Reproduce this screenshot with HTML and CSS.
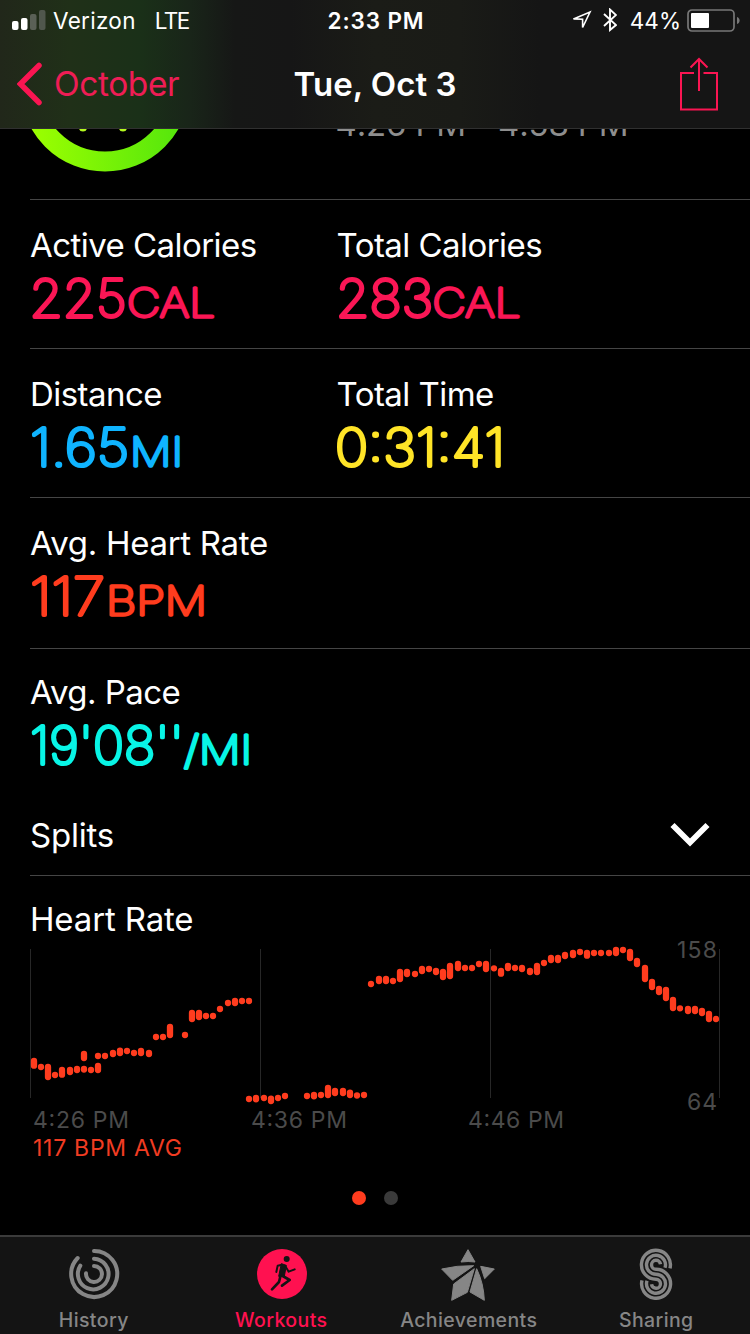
FILE: index.html
```html
<!DOCTYPE html>
<html>
	<head>
		<meta charset="utf-8">
		<title>Workouts</title>
		<link rel="stylesheet" href="styles.css">
	</head>
	<body>
		<header class="header">
			<div class="status">
				<div class="status-left">
					<svg class="signal" viewBox="0 0 34 21">
						<rect x="0" y="11" width="6.5" height="9" rx="2" fill="#fff"/>
						<rect x="9" y="8" width="6.5" height="12" rx="2" fill="#fff"/>
						<rect x="18" y="4" width="6.5" height="16" rx="2" fill="#5a6056"/>
						<rect x="27" y="0" width="6.5" height="20" rx="2" fill="#50574d"/>
					</svg>
					<span class="carrier">Verizon</span>
					<span class="network">LTE</span>
				</div>
				<div class="clock">2:33 PM</div>
				<div class="status-right">
					<svg class="location" viewBox="0 0 20 20">
						<path d="M1.5 8.9L18 2L10.600 17.500L10.600 9.200Z" fill="none" stroke="#fff" stroke-width="1.6"/>
					</svg>
					<svg class="bluetooth" viewBox="0 0 14 24">
						<path d="M1 6L13 17L7 22V1.500L13 7L1 18" fill="none" stroke="#fff" stroke-width="1.9"/>
					</svg>
					<span class="percent">44%</span>
					<svg class="battery" viewBox="0 0 54 24">
						<rect x="1" y="1" width="46" height="21" rx="4" fill="none" stroke="#777" stroke-width="1.7"/>
						<rect x="4" y="4" width="18" height="15" rx="1" fill="#fff"/>
						<path d="M50 8C53.500 9 53.500 14 50 15Z" fill="#777"/>
					</svg>
				</div>
			</div>
			<div class="nav">
				<a class="back">
					<svg class="back-icon" viewBox="0 0 26 44">
						<path d="M22 3.500L3.500 22L22 40.500" fill="none" stroke="#fa1552" stroke-width="5.500" stroke-linecap="round"/>
					</svg>
					<span>October</span>
				</a>
				<h1 class="title">Tue, Oct 3</h1>
				<a class="share">
					<svg class="share-icon" viewBox="0 0 40 54">
						<path d="M15 16H2V52.500H38V16H24.500M20 34V3M11.500 10.500L20 2L28.500 10.500" fill="none" stroke="#fa1552" stroke-width="2"/>
					</svg>
				</a>
			</div>
		</header>

		<main class="content">
			<!-- workout summary, scrolled under the header -->
			<section class="summary">
				<svg class="ring" viewBox="0 0 150 70">
					<defs>
						<linearGradient id="green" x1="0" x2="1">
							<stop offset="0" stop-color="#9cff00"/>
							<stop offset="1" stop-color="#55e60c"/>
						</linearGradient>
					</defs>
					<circle cx="75" cy="-42.200" r="74.700" fill="none" stroke="url(#green)" stroke-width="20"/>
					<circle cx="53" cy="-1.500" r="4" fill="#b4fa20"/>
					<circle cx="93" cy="-1.500" r="4" fill="#b4fa20"/>
				</svg>
				<div class="times"><span>4:26 PM</span><span>4:58 PM</span></div>
			</section>

			<section class="row">
				<div class="stat">
					<div class="label">Active Calories</div>
					<svg class="value pink" viewBox="0 0 300 56">
						<text class="num" x="-0.500" y="45.500" textLength="97" lengthAdjust="spacingAndGlyphs">225</text>
						<text class="unit" x="97" y="45.500" textLength="88" lengthAdjust="spacingAndGlyphs">CAL</text>
					</svg>
				</div>
				<div class="stat">
					<div class="label">Total Calories</div>
					<svg class="value pink" viewBox="0 0 300 56">
						<text class="num" x="-1" y="45.500" textLength="97" lengthAdjust="spacingAndGlyphs">283</text>
						<text class="unit" x="95.500" y="45.500" textLength="88" lengthAdjust="spacingAndGlyphs">CAL</text>
					</svg>
				</div>
			</section>

			<section class="row">
				<div class="stat">
					<div class="label">Distance</div>
					<svg class="value blue" viewBox="0 0 300 56">
						<text class="num" x="0" y="45.500" textLength="99" lengthAdjust="spacingAndGlyphs">1.65</text>
						<text class="unit" x="100" y="45.500" textLength="53" lengthAdjust="spacingAndGlyphs">MI</text>
					</svg>
				</div>
				<div class="stat">
					<div class="label">Total Time</div>
					<svg class="value yellow" viewBox="0 0 300 56">
						<text class="num" x="-2" y="45.500" textLength="170" lengthAdjust="spacingAndGlyphs">0:31:41</text>
					</svg>
				</div>
			</section>

			<section class="row row-heart">
				<div class="stat">
					<div class="label wide">Avg. Heart Rate</div>
					<svg class="value red" viewBox="0 0 300 56">
						<text class="num" x="0" y="45.500" textLength="75" lengthAdjust="spacingAndGlyphs">117</text>
						<text class="unit" x="76" y="45.500" textLength="101" lengthAdjust="spacingAndGlyphs">BPM</text>
					</svg>
				</div>
			</section>

			<section class="row row-pace">
				<div class="stat">
					<div class="label">Avg. Pace</div>
					<svg class="value cyan" viewBox="0 0 300 56">
						<text class="num" x="0" y="45.500" textLength="154" lengthAdjust="spacingAndGlyphs">19'08''</text>
						<text class="unit" x="154" y="45.500" textLength="68" lengthAdjust="spacingAndGlyphs">/MI</text>
					</svg>
				</div>
			</section>

			<section class="splits">
				<div class="label">Splits</div>
				<svg class="chevron" viewBox="0 0 40 26">
					<path d="M2.500 3L20 20.500L37.500 3" fill="none" stroke="#fff" stroke-width="5.800"/>
				</svg>
			</section>

			<section class="heart">
				<div class="label">Heart Rate</div>
				<svg class="chart" viewBox="0 0 750 230">
					<path class="grid" d="M30.500 9V158M260.500 9V158M490.500 9V158M719.500 9V158"/>
					<path class="beats" d="M34 121v4.700M41 127v.01M48 127v10M55 135v.01M62 130v4.700M70 130v2M77 129v1M84 129v.5M91 130v.01M98 126v4
						M84 114v4M98 116v.01M105 116v.01M113 113v1M120 110.700v2.300M127 111v.01M134 113v.01M141 111v2M149 113v1
						M156 97v.01M163 97v.01M170 87v8M185 95v.01M192 73v6M199 73v4M206 76v.01M213 76v.01M220 69v.01M228 63v.01M235 61v2M242 61v.01M249 61v.01
						M249 159v.01M256 158v1.300M264 158v.01M271 158.700v2.300M278 158v.01M285 156v.01
						M307 156v.01M314 155v1.300M321 155v.01M328 148v7M335 151v2M343 151v2M350 152.700v2.300M357 155.500v.01M364 155v.01
						M371 44v.01M379 39v2M386 39v2M393 41v.01M400 32v7M407 32v2M415 34v.01M422 29v2M429 29v.01M436 31v1M443 32v5M450 26v10M458 24v4
						M465 28v.01M472 28v.01M479 24v.01M486 24v5M494 28.300v.01M501 31v2.700M508 26v2M515 28v.01M522 28v1M530 31v1M537 26v6M544 23v.01
						M551 18v2M558 18v2M565 15v1M573 13v2M580 12v.01M587 13v2.700M594 13v.01M601 13v.01M609 13v.01M616 10v3M623 10v.01M630 12v6
						M637 21v3M645 28v11M652 42v5M659 49v3M666 50v8M673 60v8M680 68.300v.01M688 69v2M695 69v2M702 71v2M709 74v5M716 79v.01"/>
					<text class="axis" x="33" y="188" textLength="96">4:26 PM</text>
					<text class="axis" x="251" y="188" textLength="96">4:36 PM</text>
					<text class="axis" x="468" y="188" textLength="96">4:46 PM</text>
					<text class="axis" x="677" y="18" textLength="40">158</text>
					<text class="axis" x="687" y="170" textLength="30">64</text>
					<text class="axis avg" x="33" y="216" textLength="149">117 BPM AVG</text>
				</svg>
			</section>

			<div class="pages"><span class="dot dot-on"></span><span class="dot"></span></div>
		</main>

		<nav class="tabs">
			<a class="tab">
				<svg class="tab-icon" viewBox="201 54 162 162">
					<g fill="none" stroke="#868686" stroke-width="12" stroke-linecap="round">
						<path d="M282 63A69 69 0 1 1 233 84"/>
						<path d="M282 86A46 46 0 1 1 241 107"/>
						<path d="M282 108A24 24 0 1 1 258 130"/>
					</g>
				</svg>
				<span>History</span>
			</a>
			<a class="tab tab-on">
				<svg class="tab-icon" viewBox="762 54 162 162">
					<circle cx="846" cy="132" r="75" fill="#ff1150"/>
					<circle cx="860" cy="87" r="9" fill="#141414"/>
					<path d="M844 101L859 106L853 139L836 139Z" fill="#141414" stroke="#141414" stroke-width="3" stroke-linejoin="round"/>
					<g fill="none" stroke="#141414" stroke-linecap="round" stroke-linejoin="round">
						<path stroke-width="6" d="M846 104L833 107L829 126M857 110L866 125L884 118"/>
						<path stroke-width="8" d="M841 140L837 156L816 178M848 138L869 150L846 167"/>
					</g>
				</svg>
				<span>Workouts</span>
			</a>
			<a class="tab">
				<svg class="tab-icon" viewBox="201 54 162 162" overflow="visible">
					<g fill="#868686" stroke="#868686" stroke-width="3" stroke-linejoin="round">
						<path d="M279 59L258 96Q280 93 300 96Z"/>
						<path d="M200 117Q245 106 296 107L233 151Z"/>
						<path d="M298 116L277 187L230 211L236 162Z"/>
						<path d="M305 116L285 186L328 211Q326 160 305 116Z"/>
						<path d="M317 109L358 117L329 146Z"/>
					</g>
				</svg>
				<span>Achievements</span>
			</a>
			<a class="tab">
				<svg class="tab-icon" viewBox="629 1247.700 54 54">
					<g fill="none" stroke="#868686" stroke-width="3.400">
						<path d="M670 1268A14.500 14.500 0 1 0 656 1279A4.500 4.500 0 1 1 651.500 1284"/>
						<path d="M665 1267.500A9.500 9.500 0 1 0 656 1274A9.500 9.500 0 1 1 647 1280.500"/>
						<path d="M660.500 1264A4.500 4.500 0 1 0 656 1269A14.500 14.500 0 1 1 642 1280"/>
					</g>
				</svg>
				<span>Sharing</span>
			</a>
		</nav>
	</body>
</html>
```

FILE: styles.css
```css
* {
  box-sizing: border-box;
  margin: 0;
  padding: 0;
}
body {
  width: 750px;
  height: 1334px;
  display: flex;
  flex-direction: column;
  overflow: hidden;
  background-color: #000;
  color: #fff;
  font-family: Inter, "Liberation Sans", sans-serif;
}
svg {
  display: block;
  flex: none;
}
.header {
  height: 129px;
  flex: none;
  z-index: 1;
  border-bottom: 1px solid #303030;
  background: linear-gradient(90deg, #21271a 0, #203018 70px, #1a3018 140px, #192519 190px, #161716 235px, #161616 290px, #1b1c17 375px, #1a1b17 460px, #151515 540px, #151515 100%);
}
.status {
  height: 40px;
  display: grid;
  grid-template-columns: 1fr auto 1fr;
  align-items: center;
  padding: 0 12px;
  font-size: 22.5px;
}
.status-left, .status-right {
  display: flex;
  align-items: center;
}
.status-right {
  justify-content: flex-end;
}
.signal {
  width: 34px;
  height: 21px;
}
.carrier {
  margin-left: 7px;
  letter-spacing: 0.3px;
}
.network {
  margin-left: 19px;
  letter-spacing: -1.5px;
}
.clock {
  font-weight: 600;
  letter-spacing: 0.9px;
  padding-left: 2px;
}
.location {
  width: 20px;
  height: 20px;
}
.bluetooth {
  width: 14px;
  height: 24px;
  margin-left: 11px;
}
.percent {
  margin-left: 13px;
}
.battery {
  width: 54px;
  height: 24px;
  margin-top: 2px;
  margin-left: 6px;
  margin-right: -3px;
}
.nav {
  height: 88px;
  display: grid;
  grid-template-columns: 1fr auto 1fr;
  align-items: center;
  padding: 0 17px;
}
.back {
  display: flex;
  align-items: center;
  color: #ee1d55;
  font-size: 33.5px;
  letter-spacing: -0.4px;
}
.back-icon {
  width: 26px;
  height: 44px;
  margin-right: 11px;
}
.title {
  font-size: 33px;
  font-weight: 600;
}
.share-icon {
  width: 40px;
  height: 54px;
  margin-left: auto;
  margin-right: 14px;
}
.content {
  flex: 1;
}
.summary {
  height: 71px;
  display: flex;
  margin-left: 30px;
  overflow: hidden;
  border-bottom: 1px solid #454545;
}
.ring {
  width: 150px;
  height: 70px;
}
.times {
  display: flex;
  gap: 32px;
  margin: -25px 0 0 155.500px;
  color: #8e8e8e;
  font-size: 33px;
  line-height: 40px;
  letter-spacing: -0.150px;
}
.row {
  height: 149px;
  display: flex;
  margin-left: 30px;
  padding-top: 25px;
  border-bottom: 1px solid #454545;
}
.row-heart {
  height: 151px;
}
.row-pace {
  height: 145px;
  padding-top: 23px;
  border-bottom: none;
}
.stat {
  width: 306.500px;
}
.label {
  font-size: 33px;
  line-height: 40px;
  letter-spacing: -0.550px;
  white-space: nowrap;
}
.wide {
  letter-spacing: -0.300px;
}
.value {
  width: 300px;
  height: 56px;
  margin-top: 6px;
  overflow: visible;
  fill: currentColor;
  stroke: currentColor;
  stroke-width: 3.800px;
  stroke-linejoin: round;
  font-weight: 100;
}
.num {
  font-size: 52px;
}
.unit {
  font-size: 39.500px;
  stroke-width: 3.300px;
}
.pink {
  color: #fa1655;
}
.blue {
  color: #0fb4ff;
}
.yellow {
  color: #ffe427;
}
.red {
  color: #ff3c1e;
}
.cyan {
  color: #08f5e6;
}
.splits {
  height: 82px;
  display: flex;
  align-items: center;
  justify-content: space-between;
  margin-left: 30px;
  padding-right: 40px;
  border-bottom: 1px solid #454545;
}
.splits .label {
  letter-spacing: -0.200px;
}
.chevron {
  width: 40px;
  height: 26px;
}
.heart {
  height: 294px;
  padding-top: 23px;
}
.heart .label {
  margin: 0 0 1px 30px;
  letter-spacing: -0.150px;
}
.chart {
  width: 750px;
  height: 230px;
  overflow: visible;
}
.grid {
  stroke: #272727;
}
.beats {
  fill: none;
  stroke: #ff3c1e;
  stroke-width: 6.300px;
  stroke-linecap: round;
}
.axis {
  fill: #4b4b4b;
  font-size: 23px;
}
.avg {
  fill: #f23c22;
}
.pages {
  display: flex;
  justify-content: center;
  gap: 18px;
  padding-top: 21px;
}
.dot {
  width: 14px;
  height: 14px;
  border-radius: 50%;
  background-color: #3a3a3a;
}
.dot-on {
  background-color: #ff3c1e;
}
.tabs {
  height: 99px;
  flex: none;
  display: grid;
  grid-template-columns: repeat(4, 1fr);
  border-top: 2px solid #3b3b3b;
  background-color: #141414;
}
.tab {
  display: flex;
  flex-direction: column;
  align-items: center;
  padding-top: 11px;
  color: #868686;
  font-size: 19.500px;
  font-weight: 500;
  line-height: 24px;
  letter-spacing: 0.400px;
}
.tab-on {
  color: #ff1150;
}
.tab-icon {
  width: 54px;
  height: 54px;
  margin-bottom: 6px;
}
```
